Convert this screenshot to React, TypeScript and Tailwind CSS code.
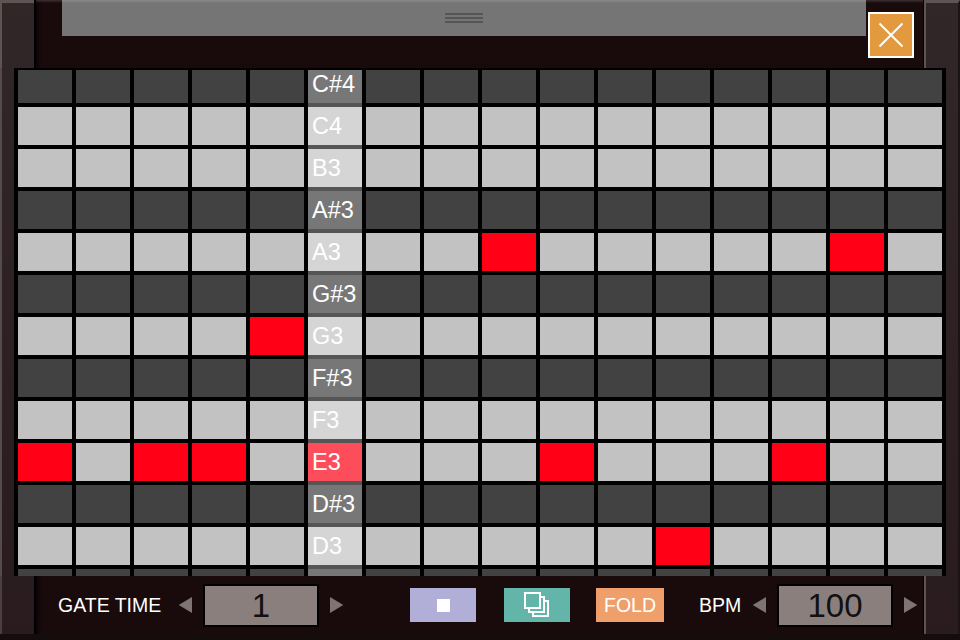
const rows = [
  { note: 'C#4', black: true, on: [] as number[] },
  { note: 'C4', black: false, on: [] },
  { note: 'B3', black: false, on: [] },
  { note: 'A#3', black: true, on: [] },
  { note: 'A3', black: false, on: [8, 14] },
  { note: 'G#3', black: true, on: [] },
  { note: 'G3', black: false, on: [4] },
  { note: 'F#3', black: true, on: [] },
  { note: 'F3', black: false, on: [] },
  { note: 'E3', black: false, on: [0, 2, 3, 9, 13], active: true },
  { note: 'D#3', black: true, on: [] },
  { note: 'D3', black: false, on: [11] },
  { note: '', black: true, on: [] },
];

const cols = [0, 1, 2, 3, 4, 'key', 6, 7, 8, 9, 10, 11, 12, 13, 14, 15] as const;

function Triangle({ dir }: { dir: 'left' | 'right' }) {
  return (
    <svg width="14" height="16" viewBox="0 0 14 16" className="-mt-[1px] block shrink-0">
      <polygon points={dir === 'left' ? '14,0 14,16 0.7,8' : '0,0 0,16 13.3,8'} fill="#7e7474" />
    </svg>
  );
}

function Stepper({ value }: { value: string }) {
  return (
    <div className="flex items-center">
      <Triangle dir="left" />
      <div className="ml-[11px] flex h-[43px] w-[116px] items-center justify-center border-2 border-black bg-[#8a7f7d] pt-[1px] text-[33px] font-light text-[#111]">
        {value}
      </div>
      <div className="ml-[11px]">
        <Triangle dir="right" />
      </div>
    </div>
  );
}

export default function App() {
  return (
    <div className="flex h-[640px] w-[960px] flex-col overflow-hidden bg-[linear-gradient(to_bottom,#312728,#291b1e)] font-['Liberation_Sans',sans-serif] text-white">
      {/* Top */}
      <div className="flex h-[68px] shrink-0">
        <div className="w-[34px] shrink-0 border-l-2 border-t-[3px] border-l-[#5e5454] border-t-[#5e5454]" />
        <div className="flex flex-1 border-l-2 border-r border-black bg-[linear-gradient(to_bottom,#3a3032,transparent_3px),linear-gradient(to_right,#0a0405,#190a0c_6px)]">
          <div className="ml-[26px] flex h-[36px] w-[804px] flex-col items-center justify-center gap-[2px] bg-[linear-gradient(to_bottom,#8a8a8a,#757575_3px)]">
            <div className="h-[2px] w-[38px] bg-[#555]" />
            <div className="h-[2px] w-[38px] bg-[#555]" />
            <div className="h-[2px] w-[38px] bg-[#555]" />
          </div>
          <button className="ml-[2px] mt-[12px] flex h-[46px] w-[46px] items-center justify-center border-2 border-white bg-[#e39a3f]">
            <svg width="26" height="26" viewBox="0 0 26 26" className="block">
              <path d="M1.5 1.5 L24.5 24.5 M24.5 1.5 L1.5 24.5" stroke="#fff" strokeWidth="2" />
            </svg>
          </button>
        </div>
        <div className="w-[36px] shrink-0 border-l-2 border-r-2 border-t-[3px] border-l-[#5e5454] border-r-[#1c1315] border-t-[#5e5454]" />
      </div>

      {/* Note grid */}
      <div className="flex h-[508px] shrink-0">
        <div className="w-[14px] shrink-0 border-l-2 border-l-[#554b4b]" />
        <div className="h-[508px] w-[932px] shrink-0 overflow-hidden border-t-2 border-black bg-black pl-1 pr-1">
          <div className="-mt-[5px]">
            {rows.map((row) => (
              <div key={row.note || 'last'} className="flex h-[42px] gap-1">
                {cols.map((col) => {
                  if (col === 'key') {
                    const bg = row.active ? 'bg-[#fe4d5a]' : row.black ? 'bg-[#777]' : 'bg-[#d5d5d5]';
                    return (
                      <div
                        key={col}
                        className={`flex h-[42px] w-[54px] items-center border-b-4 border-[#555] pl-1 pt-[2px] text-[23.5px] ${bg}`}
                      >
                        {row.note}
                      </div>
                    );
                  }
                  const color = row.on.includes(col) ? 'bg-[#ff0017]' : row.black ? 'bg-[#424242]' : 'bg-[#c2c2c2]';
                  return <div key={col} className={`h-[38px] w-[54px] ${color}`} />;
                })}
              </div>
            ))}
          </div>
        </div>
        <div className="w-[14px] shrink-0 border-r-2 border-r-[#1c1315]" />
      </div>

      {/* Bottom controls */}
      <div className="flex h-[58px] shrink-0">
        <div className="w-[34px] shrink-0 border-l-2 border-l-[#4a4040]" />
        <div className="flex flex-1 items-center border-l-2 border-r border-black bg-[linear-gradient(to_right,#0a0405,#190a0c_6px)] text-[19.5px]">
          <span className="ml-[22px] w-[120px] shrink-0 pt-[1px]">GATE TIME</span>
          <Stepper value="1" />
          <button className="ml-[66px] flex h-[34px] w-[66px] items-center justify-center bg-[#b1aed8]">
            <div className="h-[13px] w-[13px] bg-white" />
          </button>
          <button className="ml-[28px] flex h-[34px] w-[66px] items-center justify-center bg-[#62b5a8]">
            <svg width="26" height="26" viewBox="0 0 26 26" className="block">
              <rect x="9" y="9" width="15" height="15" fill="#62b5a8" stroke="#fff" strokeWidth="2" />
              <rect x="5" y="5" width="15" height="15" fill="#62b5a8" stroke="#fff" strokeWidth="2" />
              <rect x="1" y="1" width="15" height="15" fill="#62b5a8" stroke="#fff" strokeWidth="2" />
            </svg>
          </button>
          <button className="ml-[26px] flex h-[34px] w-[68px] items-center justify-center bg-[#efa06a] pt-[1px]">FOLD</button>
          <span className="ml-[35px] w-[53px] shrink-0 pt-[1px]">BPM</span>
          <Stepper value="100" />
        </div>
        <div className="w-[36px] shrink-0 border-l-2 border-r-2 border-l-[#5e5454] border-r-[#1c1315]" />
      </div>
      <div className="h-[6px] shrink-0 bg-[#150c0e]" />
    </div>
  );
}
